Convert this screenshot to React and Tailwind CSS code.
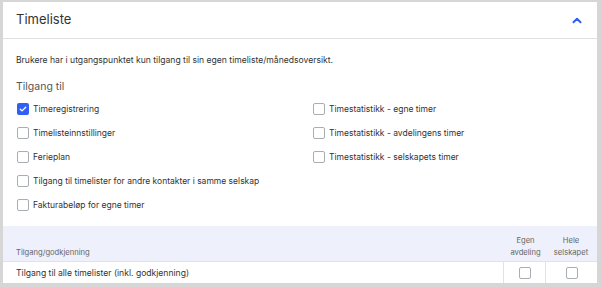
import React from "react";

function Box({ checked }) {
  if (checked) {
    return (
      <span className="flex h-[12px] w-[12px] shrink-0 items-center justify-center rounded-[2px] bg-[#2f5ff5]">
        <svg width="8" height="8" viewBox="0 0 8 8" fill="none">
          <path d="M1.3 4.2 L3.1 5.9 L6.7 2.2" stroke="white" strokeWidth="1.3" strokeLinecap="round" strokeLinejoin="round" />
        </svg>
      </span>
    );
  }
  return <span className="block h-[12px] w-[12px] shrink-0 rounded-[2px] border border-[#a9adb5] bg-white" />;
}

function Item({ label, checked }) {
  return (
    <div className="flex h-[24px] items-center gap-[4px]">
      <Box checked={checked} />
      <span className="text-[8.5px] text-[#333]">{label}</span>
    </div>
  );
}

export default function App() {
  return (
    <div
      className="h-[287px] w-[601px] bg-[#d6d6d6] pb-[4px] pl-[3px] pr-[4px] pt-[2px]"
      style={{ fontFamily: "Inter, 'Noto Sans', sans-serif" }}
    >
      <div className="flex h-full flex-col bg-white">
        <div className="flex h-[37px] shrink-0 items-center justify-between border-b border-[#e2e2e2] pl-[13px] pr-[15px]">
          <span className="text-[13px] text-[#333]">Timeliste</span>
          <svg width="10" height="7" viewBox="0 0 10 7" fill="none">
            <path d="M1.5 5.2 L5 1.8 L8.5 5.2" stroke="#2f5ff5" strokeWidth="2" strokeLinecap="round" strokeLinejoin="round" />
          </svg>
        </div>
        <div className="pl-[13px] pt-[15px]">
          <div className="text-[8.6px] leading-[12px] text-[#333]">
            Brukere har i utgangspunktet kun tilgang til sin egen timeliste/månedsoversikt.
          </div>
          <div className="mt-[15px] text-[10.5px] leading-[12px] text-[#555]">Tilgang til</div>
          <div className="mt-[4px] grid grid-cols-[296px_1fr] pl-[1px]">
            <div className="flex flex-col">
              <Item label="Timeregistrering" checked />
              <Item label="Timelisteinnstillinger" />
              <Item label="Ferieplan" />
              <Item label="Tilgang til timelister for andre kontakter i samme selskap" />
              <Item label="Fakturabeløp for egne timer" />
            </div>
            <div className="flex flex-col">
              <Item label="Timestatistikk - egne timer" />
              <Item label="Timestatistikk - avdelingens timer" />
              <Item label="Timestatistikk - selskapets timer" />
            </div>
          </div>
        </div>
        <div className="mt-auto">
          <div className="grid h-[36px] grid-cols-[1fr_42px_52px] border-b border-[#e2e2e2] bg-[#eef0fb]">
            <div className="flex items-end pb-[2px] pl-[13px] text-[7.6px] leading-[12px] text-[#666]">Tilgang/godkjenning</div>
            <div className="flex flex-col items-center justify-end pb-[2px] pl-[3px] text-center text-[7.6px] leading-[12px] text-[#666]">
              <span>Egen</span>
              <span>avdeling</span>
            </div>
            <div className="flex flex-col items-center justify-end pb-[2px] text-center text-[7.6px] leading-[12px] text-[#666]">
              <span>Hele</span>
              <span>selskapet</span>
            </div>
          </div>
          <div className="grid h-[21px] grid-cols-[1fr_42px_52px]">
            <div className="flex items-center pl-[13px] pt-[1px] text-[8.6px] text-[#333]">
              Tilgang til alle timelister (inkl. godkjenning)
            </div>
            <div className="flex items-center justify-center border-l border-[#e2e2e2] pt-[1px]">
              <Box />
            </div>
            <div className="flex items-center justify-center border-l border-[#e2e2e2] pt-[1px]">
              <Box />
            </div>
          </div>
        </div>
      </div>
    </div>
  );
}
